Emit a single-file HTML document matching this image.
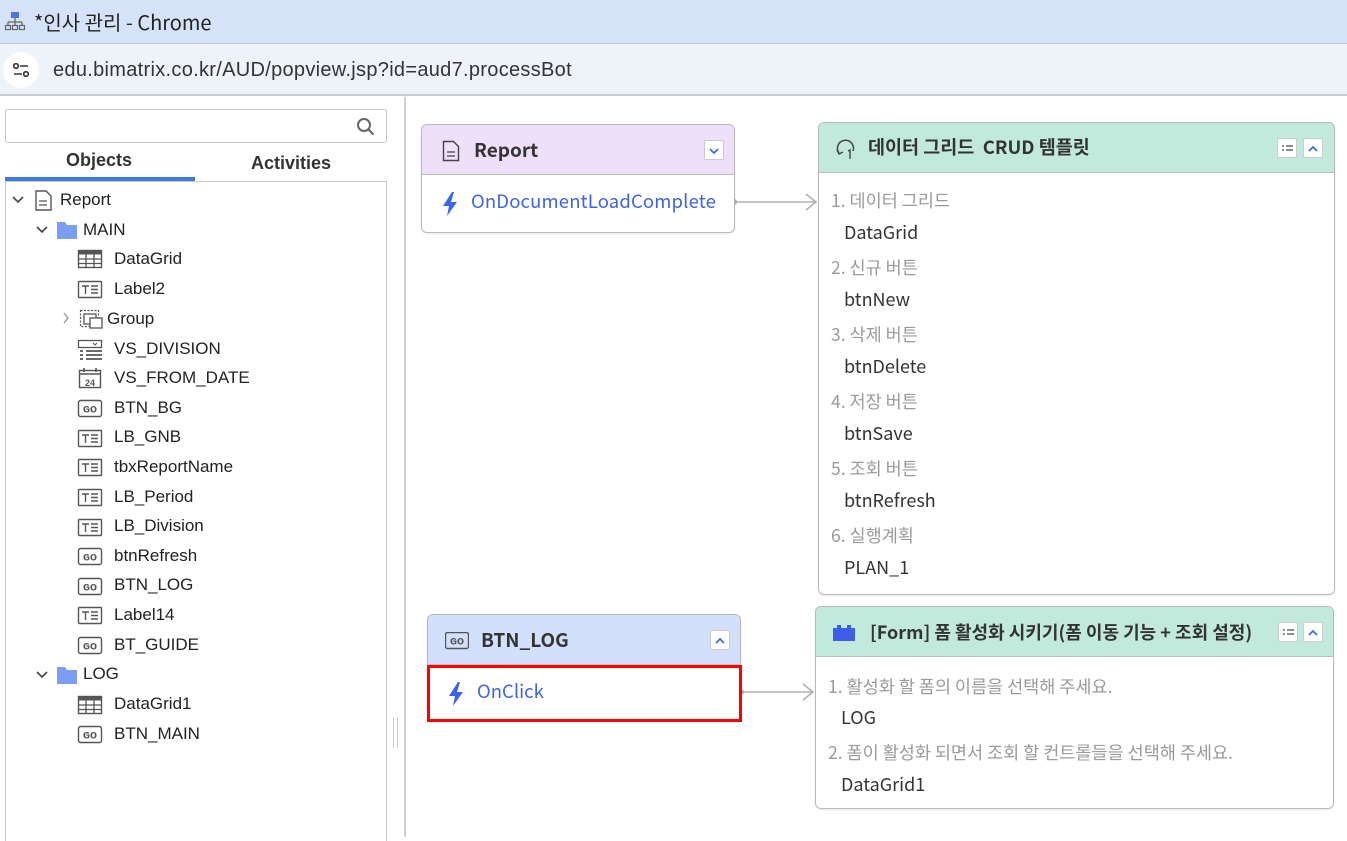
<!DOCTYPE html>
<html><head><meta charset="utf-8"><style>
*{margin:0;padding:0;box-sizing:border-box}
body{width:1347px;height:837px;overflow:hidden;background:#fff;font-family:"Liberation Sans","Noto Sans CJK KR",sans-serif;position:relative;color:#222}
.a{position:absolute}
.title{left:0;top:0;width:1347px;height:44px;background:#d5e2f7;border-bottom:1px solid #bcc6d6}
.addr{left:0;top:44px;width:1347px;height:52px;background:#eef2f9;border-bottom:2px solid #c9ccd2}
.tree{font-size:17px;color:#222;white-space:nowrap}
.ico{position:absolute}
.k{font-family:"Noto Sans CJK KR","Liberation Sans",sans-serif}
.card{position:absolute;border:1.5px solid #b9b9b9;border-radius:6px;background:#fff;overflow:hidden;box-shadow:0 1px 2px rgba(0,0,0,.08)}
.hd{position:absolute;left:0;top:0;right:0;border-bottom:1px solid #bdbdbd}
.btn{position:absolute;width:20px;height:20px;background:#fff;border:1px solid #ccc;border-radius:2px}
.lbl{position:absolute;font-size:17.5px;color:#9a9a9a}
.val{position:absolute;font-size:18px;color:#333}
</style></head><body>
<div class="a title"></div>
<svg class="a" style="left:4px;top:10px" width="22" height="22" viewBox="0 0 22 22"><rect x="7" y="2" width="8" height="6" fill="#4a78d8"/><path d="M11 8v4M4 12h14M4 12v3M11 12v3M18 12v3" stroke="#666" stroke-width="1.3" fill="none"/><rect x="1.5" y="15.5" width="5" height="4" fill="none" stroke="#666" stroke-width="1.2"/><rect x="8.5" y="15.5" width="5" height="4" fill="none" stroke="#666" stroke-width="1.2"/><rect x="15.5" y="15.5" width="5" height="4" fill="none" stroke="#666" stroke-width="1.2"/></svg>
<div class="a k" style="left:34px;top:7px;font-size:20px;color:#222">*인사 관리 - Chrome</div>
<div class="a addr"></div>
<div class="a" style="left:3px;top:52px;width:36px;height:36px;border-radius:18px;background:#fff"></div>
<svg class="a" style="left:11px;top:60px" width="20" height="20" viewBox="0 0 20 20"><circle cx="5" cy="6" r="2.3" fill="none" stroke="#333" stroke-width="1.6"/><path d="M9 6h8M3 14h8" stroke="#333" stroke-width="1.6"/><circle cx="15" cy="14" r="2.3" fill="none" stroke="#333" stroke-width="1.6"/></svg>
<div class="a" style="left:53px;top:59px;font-size:20px;color:#333;letter-spacing:0.3px">edu.bimatrix.co.kr/AUD/popview.jsp?id=aud7.processBot</div>

<!-- left panel -->
<div class="a" style="left:5px;top:109px;width:382px;height:34px;border:1px solid #c8c8c8;border-radius:3px"></div>
<svg class="a" style="left:355px;top:116px" width="22" height="22" viewBox="0 0 22 22"><circle cx="9" cy="9" r="6" fill="none" stroke="#666" stroke-width="2"/><path d="M13.5 13.5l5 5" stroke="#666" stroke-width="2.2"/></svg>
<div class="a" style="left:66px;top:150px;font-size:18px;font-weight:bold;color:#333">Objects</div>
<div class="a" style="left:251px;top:153px;font-size:18px;font-weight:bold;color:#333">Activities</div>
<div class="a" style="left:5px;top:177px;width:190px;height:4px;background:#3c7ae0"></div>
<div class="a" style="left:5px;top:181px;width:382px;height:660px;border:1px solid #c8c8c8;border-bottom:none"></div>
<div class="a" style="left:404px;top:97px;width:2px;height:740px;background:#d0d0d0"></div>
<div class="a" style="left:393px;top:718px;width:5px;height:30px;border-left:1px solid #ccc;border-right:1px solid #ccc"></div>

<svg class="a" width="400" height="837" style="left:0;top:0" viewBox="0 0 400 837">
<defs>
<g id="grid"><rect x="0.5" y="0.5" width="23" height="17" fill="none" stroke="#555" stroke-width="1.4"/><rect x="0.5" y="0.5" width="23" height="4" fill="#555"/><path d="M1 9h23M1 13.5h23M8 4v14M16 4v14" stroke="#555" stroke-width="1.3"/></g>
<g id="lab"><rect x="0.5" y="0.5" width="23" height="16" rx="1" fill="none" stroke="#555" stroke-width="1.4"/><path d="M4 5h7M7.5 5v8M13 5h7M13 8.5h7M13 12h7" stroke="#555" stroke-width="1.4"/></g>
<g id="go"><rect x="0.5" y="0.5" width="23" height="16" rx="2" fill="none" stroke="#555" stroke-width="1.4"/><text x="12" y="12.5" font-size="10" font-family="Liberation Mono" font-weight="bold" text-anchor="middle" fill="#555" textLength="14" lengthAdjust="spacingAndGlyphs">GO</text></g>
</defs>
<path d="M13 197l5 5 5-5" stroke="#444" stroke-width="1.6" fill="none"/>
<path d="M37 227l5 5 5-5" stroke="#444" stroke-width="1.6" fill="none"/>
<path d="M37 672l5 5 5-5" stroke="#444" stroke-width="1.6" fill="none"/>
<path d="M64 313l4 5-4 5" stroke="#999" stroke-width="1.4" fill="none"/>
<path d="M36 191h10l5 5v14h-15z" fill="none" stroke="#555" stroke-width="1.4"/><path d="M39 201h8M39 205h8" stroke="#555" stroke-width="1.3"/>
<path d="M57 222h8l2 3h10v14h-20z" fill="#7b9ef0"/>
<path d="M57 667h8l2 3h10v14h-20z" fill="#7b9ef0"/>
<use href="#grid" x="78" y="250"/>
<use href="#lab" x="78" y="281"/>
<g><rect x="80.5" y="310.5" width="18" height="16" fill="none" stroke="#555" stroke-width="1.2" stroke-dasharray="2 1.5"/><rect x="84" y="314" width="12" height="10" fill="none" stroke="#555" stroke-width="1.3"/><rect x="90" y="318" width="12" height="10" fill="#fff" stroke="#555" stroke-width="1.3"/></g>
<g><rect x="78.5" y="340.5" width="23" height="7" fill="none" stroke="#555" stroke-width="1.3"/><path d="M93 343l2 2 2-2" stroke="#555" stroke-width="1" fill="none"/><path d="M80 351h3M86 351h16M80 355h3M86 355h16M80 359h3M86 359h16" stroke="#555" stroke-width="1.8"/></g>
<g><rect x="79.5" y="370.5" width="21" height="17" fill="none" stroke="#555" stroke-width="1.4"/><path d="M79 374h22M84 368v4M96 368v4" stroke="#555" stroke-width="1.6"/><text x="90" y="386" font-size="9" font-family="Liberation Sans" font-weight="bold" text-anchor="middle" fill="#555">24</text></g>
<use href="#go" x="78" y="400"/>
<use href="#lab" x="78" y="430"/>
<use href="#lab" x="78" y="459"/>
<use href="#lab" x="78" y="489"/>
<use href="#lab" x="78" y="519"/>
<use href="#go" x="78" y="548"/>
<use href="#go" x="78" y="578"/>
<use href="#lab" x="78" y="607"/>
<use href="#go" x="78" y="637"/>
<use href="#grid" x="78" y="696"/>
<use href="#go" x="78" y="726"/>
</svg>
<div class="tree">
<div class="a" style="left:60px;top:190px">Report</div>
<div class="a" style="left:83px;top:220px">MAIN</div>
<div class="a" style="left:114px;top:249px">DataGrid</div>
<div class="a" style="left:114px;top:279px">Label2</div>
<div class="a" style="left:107px;top:309px">Group</div>
<div class="a" style="left:114px;top:339px">VS_DIVISION</div>
<div class="a" style="left:114px;top:368px">VS_FROM_DATE</div>
<div class="a" style="left:114px;top:398px">BTN_BG</div>
<div class="a" style="left:114px;top:427px">LB_GNB</div>
<div class="a" style="left:114px;top:457px">tbxReportName</div>
<div class="a" style="left:114px;top:487px">LB_Period</div>
<div class="a" style="left:114px;top:516px">LB_Division</div>
<div class="a" style="left:114px;top:546px">btnRefresh</div>
<div class="a" style="left:114px;top:575px">BTN_LOG</div>
<div class="a" style="left:114px;top:605px">Label14</div>
<div class="a" style="left:114px;top:635px">BT_GUIDE</div>
<div class="a" style="left:83px;top:664px">LOG</div>
<div class="a" style="left:114px;top:694px">DataGrid1</div>
<div class="a" style="left:114px;top:724px">BTN_MAIN</div>
</div>

<svg class="a" style="left:0;top:0" width="1347" height="837">
<circle cx="734" cy="202" r="3" fill="#aaa"/><path d="M734 202h82M806 194l10 8-10 8" stroke="#b0b0b0" stroke-width="1.6" fill="none"/>
<circle cx="741" cy="692" r="3" fill="#aaa"/><path d="M741 692h72M803 684l10 8-10 8" stroke="#b0b0b0" stroke-width="1.6" fill="none"/>
</svg>

<div class="card k" style="left:421px;top:124px;width:314px;height:109px">
 <div class="hd" style="height:50px;background:#efe0f9"></div>
 <svg class="a" style="left:20px;top:15px" width="18" height="22" viewBox="0 0 18 22"><path d="M1.5 1.5h10l5 5v14h-15z" fill="none" stroke="#444" stroke-width="1.4"/><path d="M5 12h8M5 16h8" stroke="#444" stroke-width="1.3"/></svg>
 <div class="a" style="left:52px;top:11px;font-size:19px;font-weight:bold;color:#333">Report</div>
 <div class="btn" style="left:282px;top:15px"><svg width="18" height="18"><path d="M5 7l4 4 4-4" stroke="#3a6fe0" stroke-width="1.8" fill="none"/></svg></div>
 <svg class="a" style="left:19px;top:66px" width="18" height="26" viewBox="0 0 18 26"><path d="M11 1L2 15h6l-2 10 10-14h-6l3-10z" fill="#3d63e8"/></svg>
 <div class="a" style="left:49px;top:63px;font-size:18.5px;color:#3d63e8;letter-spacing:0.15px">OnDocumentLoadComplete</div>
</div>

<div class="card k" style="left:818px;top:122px;width:517px;height:473px">
 <div class="hd" style="height:50px;background:#c1eadc"></div>
 <svg class="a" style="left:16px;top:14px" width="22" height="24" viewBox="0 0 22 24"><path d="M4 16A8 8 0 1 1 18 14" fill="none" stroke="#444" stroke-width="1.5"/><path d="M2 13l2 4 4-2" fill="none" stroke="#444" stroke-width="1.4"/><path d="M13 14l2-1v9" stroke="#444" stroke-width="1.4" fill="none"/></svg>
 <div class="a" style="left:49px;top:11px;font-size:18.5px;font-weight:bold;color:#333">데이터 그리드 &nbsp;CRUD 템플릿</div>
 <div class="btn" style="left:458px;top:15px"><svg width="18" height="18"><path d="M4 6h2M8 6h7M4 10h2M8 10h7" stroke="#666" stroke-width="1.6"/></svg></div>
 <div class="btn" style="left:484px;top:15px"><svg width="18" height="18"><path d="M5 11l4-4 4 4" stroke="#3a6fe0" stroke-width="1.8" fill="none"/></svg></div>
 <div class="lbl" style="left:12px;top:65px">1. 데이터 그리드</div><div class="val" style="left:25px;top:96px">DataGrid</div>
 <div class="lbl" style="left:12px;top:132px">2. 신규 버튼</div><div class="val" style="left:25px;top:163px">btnNew</div>
 <div class="lbl" style="left:12px;top:199px">3. 삭제 버튼</div><div class="val" style="left:25px;top:230px">btnDelete</div>
 <div class="lbl" style="left:12px;top:266px">4. 저장 버튼</div><div class="val" style="left:25px;top:297px">btnSave</div>
 <div class="lbl" style="left:12px;top:333px">5. 조회 버튼</div><div class="val" style="left:25px;top:364px">btnRefresh</div>
 <div class="lbl" style="left:12px;top:400px">6. 실행계획</div><div class="val" style="left:25px;top:431px">PLAN_1</div>
</div>

<div class="card k" style="left:427px;top:614px;width:314px;height:107px">
 <div class="hd" style="height:50px;background:#d3e0fb"></div>
 <svg class="a" style="left:17px;top:17px" width="24" height="18"><rect x="0.5" y="0.5" width="23" height="16" rx="2" fill="none" stroke="#555" stroke-width="1.4"/><text x="12" y="12.5" font-size="10" font-family="Liberation Mono" font-weight="bold" text-anchor="middle" fill="#555" textLength="14" lengthAdjust="spacingAndGlyphs">GO</text></svg>
 <div class="a" style="left:53px;top:11px;font-size:19px;font-weight:bold;color:#333">BTN_LOG</div>
 <div class="btn" style="left:282px;top:15px"><svg width="18" height="18"><path d="M5 11l4-4 4 4" stroke="#3a6fe0" stroke-width="1.8" fill="none"/></svg></div>
 <svg class="a" style="left:19px;top:66px" width="18" height="26" viewBox="0 0 18 26"><path d="M11 1L2 15h6l-2 10 10-14h-6l3-10z" fill="#3d63e8"/></svg>
 <div class="a" style="left:49px;top:63px;font-size:18.5px;color:#3d63e8">OnClick</div>
</div>
<div class="a" style="left:427px;top:665px;width:315px;height:57px;border:3px solid #f00"></div>

<div class="card k" style="left:815px;top:606px;width:519px;height:203px">
 <div class="hd" style="height:50px;background:#c1eadc"></div>
 <svg class="a" style="left:16px;top:17px" width="24" height="18"><path d="M1 4h4V1h4v3h6V1h4v3h4v13H1z" fill="#3d5ee8"/></svg>
 <div class="a" style="left:54px;top:12px;font-size:18px;font-weight:bold;color:#333">[Form] 폼 활성화 시키기(폼 이동 기능 + 조회 설정)</div>
 <div class="btn" style="left:462px;top:15px"><svg width="18" height="18"><path d="M4 6h2M8 6h7M4 10h2M8 10h7" stroke="#666" stroke-width="1.6"/></svg></div>
 <div class="btn" style="left:487px;top:15px"><svg width="18" height="18"><path d="M5 11l4-4 4 4" stroke="#3a6fe0" stroke-width="1.8" fill="none"/></svg></div>
 <div class="lbl" style="left:12px;top:67px">1. 활성화 할 폼의 이름을 선택해 주세요.</div><div class="val" style="left:25px;top:97px">LOG</div>
 <div class="lbl" style="left:12px;top:133px">2. 폼이 활성화 되면서 조회 할 컨트롤들을 선택해 주세요.</div><div class="val" style="left:25px;top:164px">DataGrid1</div>
</div>
</body></html>
